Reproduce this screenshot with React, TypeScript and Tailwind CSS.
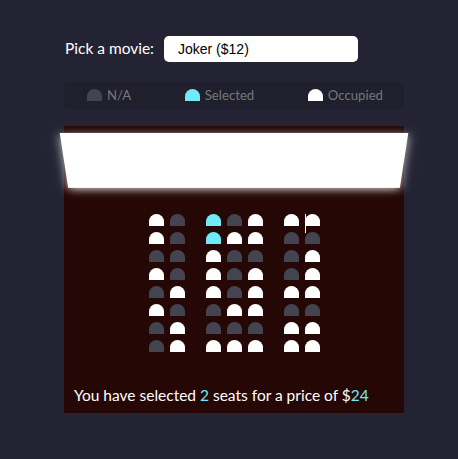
import React from "react";

type Seat = "n" | "s" | "o";

const rows: Seat[][] = [
	["o", "n", "s", "n", "o", "o", "o"],
	["o", "n", "s", "o", "o", "n", "n"],
	["n", "n", "o", "n", "n", "n", "o"],
	["o", "n", "o", "n", "o", "n", "o"],
	["n", "o", "o", "n", "o", "o", "o"],
	["o", "n", "n", "o", "o", "n", "n"],
	["n", "o", "n", "n", "n", "o", "o"],
	["n", "o", "o", "o", "o", "o", "o"],
];

const seatColor: Record<Seat, string> = {
	n: "bg-[#444451]",
	s: "bg-[#6feaf6]",
	o: "bg-white",
};

function SeatBox({ kind, className = "" }: { kind: Seat; className?: string }) {
	return (
		<div
			className={`relative h-[12px] w-[15px] rounded-t-[10px] ${seatColor[kind]} ${className}`}
		/>
	);
}

export default function App() {
	return (
		<div
			className="min-h-[459px] w-full bg-[#242333] text-white"
			style={{ fontFamily: "Lato, 'Noto Sans', sans-serif" }}
		>
			<div className="ml-[64px] flex w-[340px] flex-col pt-[36px]">
				<div className="flex h-[26px] items-center">
					<label className="pl-[1px] text-[15.5px] text-white">Pick a movie:</label>
					<div
						className="ml-[10px] flex h-[26px] w-[194px] items-center rounded-[5px] bg-white pl-[14px] text-[14px] text-black"
						style={{ fontFamily: "'Liberation Sans', Arial, sans-serif" }}
					>
						Joker ($12)
					</div>
				</div>

				<ul className="mt-[20px] flex h-[27px] items-center justify-between rounded-[5px] bg-[#201f2e] pl-[23px] pr-[21px] text-[#777]">
					<li className="flex items-center gap-[5px]">
						<SeatBox kind="n" />
						<small className="text-[13.2px]">N/A</small>
					</li>
					<li className="flex items-center gap-[5px]">
						<SeatBox kind="s" />
						<small className="text-[13.2px]">Selected</small>
					</li>
					<li className="flex items-center gap-[5px]">
						<SeatBox kind="o" />
						<small className="text-[13.2px]">Occupied</small>
					</li>
				</ul>

				<div className="mt-[17px] h-[287px] bg-[#250806] [perspective:1000px]">
					<div className="h-[70px] w-full bg-white shadow-[0_3px_10px_rgba(255,255,255,0.75)] [transform:rotateX(-45deg)]" />

					<div className="mt-[15px] flex flex-col">
						{rows.map((row, r) => (
							<div key={r} className="flex justify-center">
								{row.map((kind, i) => (
									<div
										key={i}
										className={`relative m-[3px] ${i === 1 ? "mr-[18px]" : ""} ${i === 5 ? "ml-[18px]" : ""}`}
									>
										<SeatBox kind={kind} />
										{r === 0 && i === 6 && (
											<span className="absolute left-0 top-0 h-[19px] w-[1px] bg-white" />
										)}
									</div>
								))}
							</div>
						))}
					</div>

					<p className="mt-[28px] px-[10px] text-[15.5px] leading-[24px] text-white">
						You have selected <span className="text-[#6feaf6]">2</span> seats for a
						price of $<span className="text-[#6feaf6]">24</span>
					</p>
				</div>
			</div>
		</div>
	);
}
